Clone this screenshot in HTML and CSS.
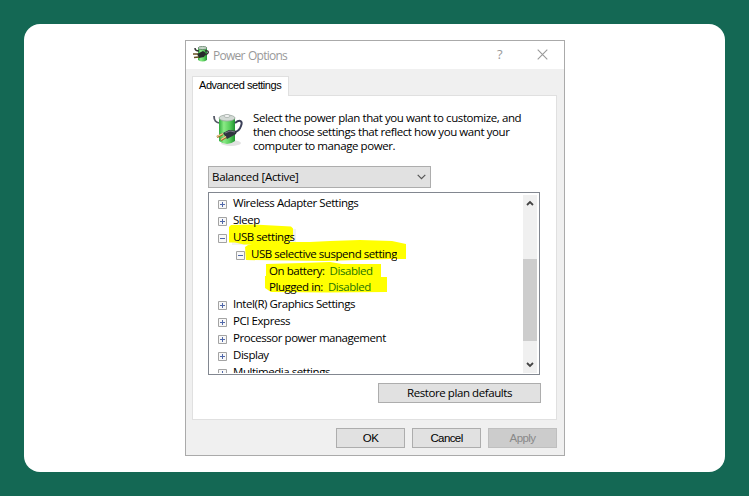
FILE: index.html
```html
<!DOCTYPE html>
<html lang="en">
<head>
<meta charset="utf-8">
<title>Power Options</title>
<link rel="stylesheet" href="styles.css">
</head>
<body>
<svg class="defs" width="0" height="0" aria-hidden="true">
<defs>
<linearGradient id="green" x1="0" x2="1"><stop offset="0" stop-color="#2fae3d"/><stop offset=".3" stop-color="#8bea86"/><stop offset=".65" stop-color="#5bd05e"/><stop offset="1" stop-color="#219432"/></linearGradient>
<symbol id="battery" viewBox="0 0 32 34">
<ellipse cx="19" cy="30" rx="10" ry="3" fill="#e2e2e2"/>
<path d="M2 3c0 5 2 6 5 7" fill="none" stroke="#555966" stroke-width="1.8"/>
<path d="M7 5v23q8 6 16 0V5z" fill="url(#green)"/>
<ellipse cx="15" cy="5" rx="8" ry="3" fill="#d3dad5" stroke="#9aa79f" stroke-width=".8"/>
<ellipse cx="15" cy="3" rx="3" ry="1.5" fill="#f5f5f5" stroke="#9aa39d" stroke-width=".7"/>
<path d="M23 10c5-4 8-2 6 3-1 3-2 5-6 6" fill="none" stroke="#3c4058" stroke-width="2"/>
<path d="M11 20l6-3 8 1-1 3-9 5z" fill="#303440"/>
<path d="M13 20l5-2 5 1" fill="none" stroke="#777b85"/>
<path d="M11 21l-6 3M14 24l-5 3" stroke="#9b6b24" stroke-width="2.5"/>
<path d="M11 20.5l-6 3M14 23.5l-5 3" stroke="#f1d297" stroke-width="1.2"/>
</symbol>
<symbol id="plus" viewBox="0 0 9 9"><path d="M.5.5h8v8h-8z" fill="#f8f8f8" stroke="#a3a3a3"/><path d="M2 4.5h5M4.5 2v5" stroke="#5068aa"/></symbol>
<symbol id="minus" viewBox="0 0 9 9"><path d="M.5.5h8v8h-8z" fill="#f8f8f8" stroke="#a3a3a3"/><path d="M2 4.5h5" stroke="#5068aa"/></symbol>
</defs>
</svg>
<main class="card">
<section class="dialog">
<header class="titlebar">
<svg class="title-icon" viewBox="0 0 16 16"><path d="M5 2v12q4.500 3 9 0V2z" fill="url(#green)"/><ellipse cx="9.500" cy="2" rx="4.500" ry="1.600" fill="#c4d5c6" stroke="#52735a" stroke-width=".7"/><path d="M2 2q0 3 4 3M12 5q4-1 3 2-1 2-4 2" fill="none" stroke="#333" stroke-width="1.500"/><path d="M4 8l6-3 3 2-2 4-5 1z" fill="#262b2b"/><path d="M5 8L0 8M6 11l-5 .5" stroke="#665022" stroke-width="1.600"/></svg>
<h1 class="title">Power Options</h1>
<span class="help">?</span>
<svg class="close" viewBox="0 0 11 11"><path d="M.7.7l9.600 9.600M10.300.7L.7 10.300" fill="none" stroke="#999" stroke-width="1.1"/></svg>
</header>
<div class="tab"><span>Advanced settings</span></div>
<div class="panel">
<div class="intro"><svg class="intro-icon"><use href="#battery"/></svg>
<p>Select the power plan that you want to customize, and<br>then choose settings that reflect how you want your<br>computer to manage power.</p></div>
<div class="combo"><span>Balanced [Active]</span><svg class="chev" viewBox="0 0 9 6"><path d="M.7.8l3.800 3.800L8.300.8" fill="none" stroke="#555" stroke-width="1.2"/></svg></div>
<div class="tree">
<svg class="marks" viewBox="0 0 330 181"><path fill="#f2f2f2" d="M23 36h64v16H23z"/><path fill="#ff0" d="M20 34l2-2 22-.5 38 2 2 2v9l-2 3-8 3-39 1-9-2h-6zM39 52l22-3 40 0 20-1 30-1 32 1 14 3v15h-16l-66 2-78-1-1-13zM57 71l36-1 28-1 12 2h39v13h6v15l-60 .5-56-.5-6-4V83h1z"/></svg>
<ul class="rows">
<li><svg><use href="#plus"/></svg><span>Wireless Adapter Settings</span></li>
<li><svg><use href="#plus"/></svg><span>Sleep</span></li>
<li><svg><use href="#minus"/></svg><span>USB settings</span></li>
<li class="sub"><svg><use href="#minus"/></svg><span>USB selective suspend setting</span></li>
<li class="leaf"><span>On battery:</span><b>Disabled</b></li>
<li class="leaf"><span>Plugged in:</span><b>Disabled</b></li>
<li><svg><use href="#plus"/></svg><span>Intel(R) Graphics Settings</span></li>
<li><svg><use href="#plus"/></svg><span>PCI Express</span></li>
<li><svg><use href="#plus"/></svg><span>Processor power management</span></li>
<li><svg><use href="#plus"/></svg><span>Display</span></li>
<li><svg><use href="#plus"/></svg><span>Multimedia settings</span></li>
</ul>
<div class="scroll"><svg viewBox="0 0 8 6"><path d="M1 5l3-3 3 3" fill="none" stroke="#444" stroke-width="1.8"/></svg><i class="thumb"></i><svg viewBox="0 0 8 6"><path d="M1 1l3 3 3-3" fill="none" stroke="#444" stroke-width="1.8"/></svg></div>
</div>
<button class="restore">Restore plan defaults</button>
</div>
<footer class="actions"><button>OK</button><button class="cancel">Cancel</button><button class="apply" disabled>Apply</button></footer>
</section>
</main>
</body>
</html>
```
FILE: styles.css
```css
* { box-sizing: border-box; }
body { margin: 0; width: 749px; height: 496px; padding: 24px; overflow: hidden; background: #146854; font-family: "Open Sans", "Noto Sans", sans-serif; font-size: 11.5px; letter-spacing: -.42px; color: #000; }
.defs { position: absolute; }
svg { display: block; flex: none; }
.card { width: 701px; height: 448px; padding: 16px 0 0 161px; border-radius: 16px; background: #fff; }
.dialog { width: 380px; height: 416px; border: 1px solid #aaa; background: #f0f0f0; }
.titlebar { display: flex; align-items: center; height: 28px; padding: 0 16px 0 7px; background: #fff; color: #999; }
.title-icon { width: 16px; height: 16px; margin-bottom: 2px; }
.title { flex: 1; margin: 0 0 0 4px; font-size: 12px; font-weight: 400; letter-spacing: -.75px; word-spacing: 1px; }
.help { width: 8px; margin: 0 32px 2px 0; font-size: 13px; }
.close { width: 11px; height: 11px; margin-bottom: 2px; }
.tab { display: flex; position: relative; z-index: 1; width: 97px; height: 20px; margin: 7px 0 0 6px; padding: 0 0 3px 6px; align-items: center; background: #fff; border: 1px solid #e0e0e0; border-bottom: 0; font-family: "Liberation Sans", sans-serif; font-size: 11px; letter-spacing: -.45px; white-space: nowrap; }
.panel { width: 365px; height: 325px; margin: -1px 0 0 6px; padding: 12px 15px 0; border: 1px solid #e0e0e0; background: #fff; }
.intro { display: flex; height: 58px; }
.intro-icon { width: 32px; height: 34px; margin: 5px 0 0 4px; }
.intro p { margin: 3px 0 0 9px; line-height: 14px; white-space: nowrap; }
.combo { display: flex; align-items: center; justify-content: space-between; width: 223px; height: 22px; padding: 0 4px 0 3px; border: 1px solid #adadad; background: #e1e1e1; letter-spacing: -.3px; }
.combo span { padding-bottom: 1px; }
.chev { width: 9px; height: 6px; }
.tree { display: flex; position: relative; justify-content: space-between; width: 332px; height: 183px; margin-top: 4px; padding: 2px 2px 1px 0; border: 1px solid #828790; overflow: hidden; }
.marks { position: absolute; left: 0; top: 0; width: 330px; height: 181px; }
.rows { position: relative; height: 178px; margin: 0; padding: 0 0 0 9px; overflow: hidden; list-style: none; letter-spacing: -.45px; }
.rows li { display: flex; align-items: center; height: 16.9px; white-space: nowrap; }
.rows li svg { width: 9px; height: 9px; margin: 2px 6px 0 0; }
.rows span, .rows b { padding-bottom: 2px; }
.rows .sub { padding-left: 18px; }
.rows .leaf { padding-left: 51px; }
.rows b { margin-left: 5px; color: #257500; font-weight: 400; }
.scroll { display: flex; flex-direction: column; align-items: center; width: 14px; height: 178px; padding: 5px 0; background: #f0f0f0; }
.scroll svg { width: 8px; height: 6px; }
.thumb { width: 14px; height: 82px; margin: 53px 0 21px; background: #cdcdcd; }
button { height: 20px; padding: 0; border: 1px solid #adadad; background: #e1e1e1; font: inherit; letter-spacing: inherit; color: #000; }
.restore { display: block; width: 163px; margin: 8px 0 0 170px; padding-bottom: 1px; }
.actions { display: flex; gap: 7px; padding: 8px 0 0 150px; font-family: "Liberation Sans", sans-serif; font-size: 11.5px; letter-spacing: -.6px; }
.actions button { width: 69px; }
.actions .apply { background: #ccc; border-color: #bfbfbf; color: #898989; }
```
